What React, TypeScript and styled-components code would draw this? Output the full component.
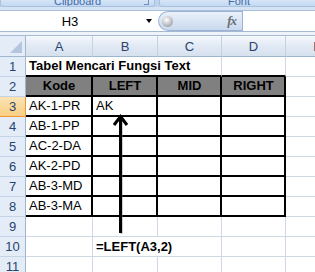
import styled, { createGlobalStyle } from 'styled-components';

const GlobalStyle = createGlobalStyle`
  html, body { margin: 0; padding: 0; background: #fff; overflow: hidden; }
  body { font-family: "Liberation Sans", Arial, sans-serif; }
`;

type Cell = { text?: string; bold?: boolean; center?: boolean; head?: boolean; span?: number };

const columns = ['A', 'B', 'C', 'D', 'E'];

const codes = ['AK-1-PR', 'AB-1-PP', 'AC-2-DA', 'AK-2-PD', 'AB-3-MD', 'AB-3-MA'];

// column index of each cell is tracked so the table border lands on A2:D8
const rows: Cell[][] = [
  [{ text: 'Tabel Mencari Fungsi Text', bold: true, span: 3 }, {}, {}],
  [
    { text: 'Kode', bold: true, center: true, head: true },
    { text: 'LEFT', bold: true, center: true, head: true },
    { text: 'MID', bold: true, center: true, head: true },
    { text: 'RIGHT', bold: true, center: true, head: true },
    {},
  ],
  ...codes.map((c, i) => [{ text: c }, { text: i === 0 ? 'AK' : '' }, {}, {}, {}]),
  [{}, {}, {}, {}, {}],
  [{}, { text: '=LEFT(A3,2)', bold: true, span: 2 }, {}, {}],
  [{}, {}, {}, {}, {}],
];

export default function App() {
  return (
    <Screen>
      <GlobalStyle />
      <Ribbon>
        <Group $width={153}>
          <GroupLabel>Clipboard</GroupLabel>
          <Launcher />
        </Group>
        <Group $width={158}>
          <GroupLabel>Font</GroupLabel>
        </Group>
      </Ribbon>
      <Band />
      <FormulaBar>
        <NameBox>
          <NameText>H3</NameText>
          <DropArrow />
        </NameBox>
        <Pill>
          <Knob />
          <Fx>fx</Fx>
        </Pill>
        <FormulaInput />
      </FormulaBar>
      <Gap />
      <Sheet>
        <Corner>
          <CornerTriangle />
        </Corner>
        {columns.map((c) => (
          <ColHead key={c}>{c}</ColHead>
        ))}
        {rows.map((cells, r) => {
          const rowNum = r + 1;
          let col = 0;
          return [
            <RowHead key={`h${rowNum}`} $active={rowNum === 3}>
              {rowNum}
            </RowHead>,
            ...cells.map((cell, ci) => {
              const span = cell.span ?? 1;
              const start = col;
              col += span;
              const inTable = rowNum >= 2 && rowNum <= 8 && start < 4;
              const aboveTable = rowNum === 1 && start < 4;
              return (
                <SheetCell
                  key={`${rowNum}-${ci}`}
                  $span={span}
                  $boxed={inTable}
                  $above={aboveTable}
                  $head={!!cell.head}
                  $bold={!!cell.bold}
                  $center={!!cell.center}
                >
                  {cell.text}
                </SheetCell>
              );
            }),
          ];
        })}
        <Arrow width="20" height="124" viewBox="0 0 20 124">
          <line x1="10.5" y1="4" x2="10.5" y2="120" stroke="#777" strokeWidth="3" opacity="0.35" />
          <line x1="9.5" y1="3" x2="9.5" y2="119" stroke="#000" strokeWidth="3" />
          <polyline points="3,11 9.5,2.5 16,11" fill="none" stroke="#000" strokeWidth="3" strokeLinejoin="miter" />
        </Arrow>
      </Sheet>
    </Screen>
  );
}

const Screen = styled.div`
  width: 315px;
  height: 272px;
  overflow: hidden;
  position: relative;
  background: #fff;
`;

const Ribbon = styled.div`
  height: 7px;
  display: flex;
  gap: 4px;
  background: #bfd3ec;
  overflow: hidden;
`;

const Group = styled.div<{ $width: number }>`
  width: ${(p) => p.$width}px;
  flex: none;
  height: 6px;
  position: relative;
  display: flex;
  align-items: flex-end;
  justify-content: center;
  background: linear-gradient(#d6e5f6, #c3d8f1);
  border: 1px solid #a7c1e2;
  border-top: none;
  border-radius: 0 0 3px 3px;
  overflow: hidden;
`;

const GroupLabel = styled.span`
  font-size: 11px;
  line-height: 11px;
  color: #3e6aaa;
  margin-bottom: -1px;
  font-family: "Liberation Sans", Arial, sans-serif;
`;

const Launcher = styled.div`
  position: absolute;
  right: 5px;
  bottom: 1px;
  width: 4px;
  height: 4px;
  border-right: 1px solid #6d8fc1;
  border-bottom: 1px solid #6d8fc1;
`;

const Band = styled.div`
  height: 3px;
  background: #d5e3f3;
  border-bottom: 1px solid #a9bfdc;
`;

const FormulaBar = styled.div`
  height: 20px;
  display: flex;
  align-items: stretch;
  background: #fff;
`;

const NameBox = styled.div`
  width: 158px;
  flex: none;
  display: flex;
  align-items: center;
  position: relative;
`;

const NameText = styled.span`
  width: 140px;
  text-align: center;
  font-size: 13px;
  color: #000;
`;

const DropArrow = styled.div`
  position: absolute;
  left: 146px;
  top: 8px;
  width: 0;
  height: 0;
  border-left: 3.5px solid transparent;
  border-right: 3.5px solid transparent;
  border-top: 4px solid #000;
`;

const Pill = styled.div`
  width: 84px;
  flex: none;
  display: flex;
  align-items: center;
  justify-content: space-between;
  padding: 0 6px 0 3px;
  box-sizing: border-box;
  background: linear-gradient(#eaf1fa, #c9d9ee);
  border: 1px solid #9ab3d5;
  border-right: none;
  border-radius: 10px 0 0 10px;
`;

const Knob = styled.div`
  width: 11px;
  height: 11px;
  border-radius: 50%;
  background: radial-gradient(circle at 40% 35%, #ffffff, #b5b8bd 60%, #8e949c);
`;

const Fx = styled.span`
  font-family: "Liberation Serif", "Times New Roman", serif;
  font-style: italic;
  font-weight: bold;
  font-size: 13px;
  color: #6b6f75;
  letter-spacing: -1px;
`;

const FormulaInput = styled.div`
  flex: 1;
  background: #fff;
  border-left: 1px solid #9ab3d5;
`;

const Gap = styled.div`
  height: 3px;
  background: #eef3fa;
  border-top: 1px solid #a5b9d4;
  border-bottom: 1px solid #a5b9d4;
`;

const Sheet = styled.div`
  position: relative;
  display: grid;
  grid-template-columns: 26px 67px 65px 64px 64px 64px;
  grid-template-rows: 21px repeat(11, 20px);
  font-size: 13px;
`;

const Corner = styled.div`
  position: relative;
  background: #e4ecf7;
  border-right: 1px solid #9eb6ce;
  border-bottom: 1px solid #9eb6ce;
  box-sizing: border-box;
`;

const CornerTriangle = styled.div`
  position: absolute;
  right: 3px;
  bottom: 3px;
  width: 0;
  height: 0;
  border-left: 12px solid transparent;
  border-bottom: 12px solid #b4c6de;
`;

const ColHead = styled.div`
  display: flex;
  align-items: center;
  justify-content: center;
  background: linear-gradient(#f6f9fd, #e1e9f4 50%, #d6e1ef);
  border-right: 1px solid #c3d2e4;
  border-bottom: 1px solid #9eb6ce;
  box-sizing: border-box;
  color: #27436f;
  font-size: 13px;
`;

const RowHead = styled.div<{ $active: boolean }>`
  display: flex;
  align-items: center;
  justify-content: center;
  background: ${(p) => (p.$active ? 'linear-gradient(#fbe3b3, #f8cf84)' : '#e4ecf7')};
  border-right: 1px solid ${(p) => (p.$active ? '#f29536' : '#9eb6ce')};
  border-bottom: 1px solid ${(p) => (p.$active ? '#f29536' : '#c5d3e6')};
  box-sizing: border-box;
  color: #27436f;
  font-size: 13px;
`;

const SheetCell = styled.div<{
  $span: number;
  $boxed: boolean;
  $above: boolean;
  $head: boolean;
  $bold: boolean;
  $center: boolean;
}>`
  grid-column: span ${(p) => p.$span};
  display: flex;
  align-items: flex-end;
  justify-content: ${(p) => (p.$center ? 'center' : 'flex-start')};
  padding: 0 2px 2px 3px;
  box-sizing: border-box;
  white-space: nowrap;
  overflow: hidden;
  background: ${(p) => (p.$head ? '#808080' : '#fff')};
  border-right: ${(p) => (p.$boxed ? '2px solid #000' : '1px solid #d0d7e5')};
  border-bottom: ${(p) => (p.$boxed || p.$above ? '2px solid #000' : '1px solid #d0d7e5')};
  font-weight: ${(p) => (p.$bold ? 'bold' : 'normal')};
  color: #000;
  line-height: 15px;
`;

const Arrow = styled.svg`
  position: absolute;
  left: 111px;
  top: 78px;
  pointer-events: none;
`;
